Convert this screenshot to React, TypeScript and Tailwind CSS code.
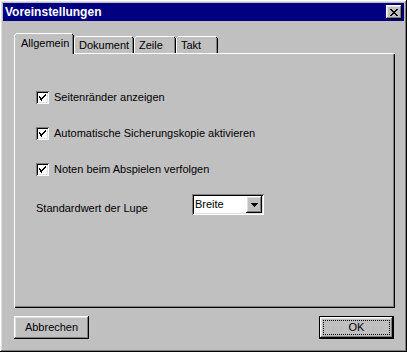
import React from "react";

const raised =
  "shadow-[inset_-1px_-1px_0_#000,inset_1px_1px_0_#fff,inset_-2px_-2px_0_#808080,inset_2px_2px_0_#dfdfdf]";
const sunken =
  "shadow-[inset_1px_1px_0_#808080,inset_-1px_-1px_0_#fff,inset_2px_2px_0_#000,inset_-2px_-2px_0_#dfdfdf]";

function Check({ label }: { label: string }) {
  return (
    <div className="flex items-center h-[13px]">
      <div className={`w-[13px] h-[13px] bg-white ${sunken} flex items-center justify-center`}>
        <svg width="7" height="7" viewBox="0 0 7 7" shapeRendering="crispEdges">
          <path
            d="M6 0h1v1h-1zM5 1h2v1h-2zM4 2h2v1h-2zM0 2h1v1h-1zM0 3h2v1h-2zM3 3h2v1h-2zM1 4h3v1h-3zM1 5h2v1h-2zM2 6h1v1h-1z"
            fill="#000"
          />
        </svg>
      </div>
      <span className="ml-[5px] leading-none">{label}</span>
    </div>
  );
}

function Tab({ label, w, selected }: { label: string; w: number; selected?: boolean }) {
  return (
    <div
      className={`relative flex items-center bg-[#c0c0c0] ${selected ? "h-[21px] z-10 -mb-[1px] pl-[7px]" : "h-[17px] pl-[5px]"}`}
      style={{ width: w }}
    >
      <div className="absolute left-0 top-[2px] bottom-0 w-[1px] bg-white" />
      <div className="absolute left-[1px] top-[1px] w-[1px] h-[1px] bg-white" />
      <div className="absolute left-[2px] top-0 right-[2px] h-[1px] bg-white" />
      <div className="absolute right-0 top-[2px] bottom-0 w-[1px] bg-black" />
      <div className="absolute right-[1px] top-[1px] w-[1px] h-[1px] bg-black" />
      <div className="absolute right-[1px] top-[2px] bottom-0 w-[1px] bg-[#808080]" />
      <span className={`leading-none ${selected ? "-mt-[1px]" : "mt-[1px]"}`}>{label}</span>
    </div>
  );
}

export default function App() {
  return (
    <div
      className={`w-[407px] h-[352px] bg-[#c0c0c0] p-[3px] flex flex-col text-[11px] text-black ${raised}`}
      style={{ fontFamily: '"Liberation Sans", Arial, sans-serif' }}
    >
      <div className="h-[18px] bg-[#000080] flex items-center justify-between pl-[2px] pr-[2px]">
        <span className="text-white font-bold text-[12px] leading-none">Voreinstellungen</span>
        <div className={`w-[16px] h-[14px] bg-[#c0c0c0] ${raised} flex items-center justify-center`}>
          <svg width="8" height="7" viewBox="0 0 8 7" shapeRendering="crispEdges">
            <path
              d="M0 0h2v1h-2zM6 0h2v1h-2zM1 1h2v1h-2zM5 1h2v1h-2zM2 2h4v1h-4zM3 3h2v1h-2zM2 4h4v1h-4zM1 5h2v1h-2zM5 5h2v1h-2zM0 6h2v1h-2zM6 6h2v1h-2z"
              fill="#000"
            />
          </svg>
        </div>
      </div>

      <div className="ml-[11px] mt-[12px] flex items-end">
        <div className="-ml-0">
          <Tab label="Allgemein" w={60} selected />
        </div>
        <Tab label="Dokument" w={60} />
        <Tab label="Zeile" w={42} />
        <Tab label="Takt" w={42} />
      </div>

      <div className="ml-[11px] w-[381px] h-[255px] bg-[#c0c0c0] shadow-[inset_1px_1px_0_#fff,inset_-1px_-1px_0_#000,inset_-2px_-2px_0_#808080] pt-[38px] pl-[22px] flex flex-col">
        <div className="flex flex-col gap-[23px]">
          <Check label="Seitenränder anzeigen" />
          <Check label="Automatische Sicherungskopie aktivieren" />
          <Check label="Noten beim Abspielen verfolgen" />
        </div>
        <div className="mt-[18px] flex items-center">
          <span className="w-[156px] leading-none mt-[8px]">Standardwert der Lupe</span>
          <div className={`w-[72px] h-[21px] bg-white ${sunken} flex items-center p-[2px]`}>
            <span className="flex-1 pl-[1px] leading-none">Breite</span>
            <div className={`w-[16px] h-[17px] bg-[#c0c0c0] ${raised} flex items-center justify-center`}>
              <svg width="7" height="4" viewBox="0 0 7 4" shapeRendering="crispEdges">
                <path d="M0 0h7v1h-7zM1 1h5v1h-5zM2 2h3v1h-3zM3 3h1v1h-1z" fill="#000" />
              </svg>
            </div>
          </div>
        </div>
      </div>

      <div className="ml-[11px] mt-[8px] w-[380px] flex justify-between">
        <div className={`w-[75px] h-[23px] ${raised} flex items-center justify-center`}>
          <span className="leading-none">Abbrechen</span>
        </div>
        <div className="w-[75px] h-[23px] border border-black">
          <div className={`w-full h-full ${raised} p-[3px]`}>
            <div className="w-full h-full border border-dotted border-black flex items-center justify-center">
              <span className="leading-none">OK</span>
            </div>
          </div>
        </div>
      </div>
    </div>
  );
}
